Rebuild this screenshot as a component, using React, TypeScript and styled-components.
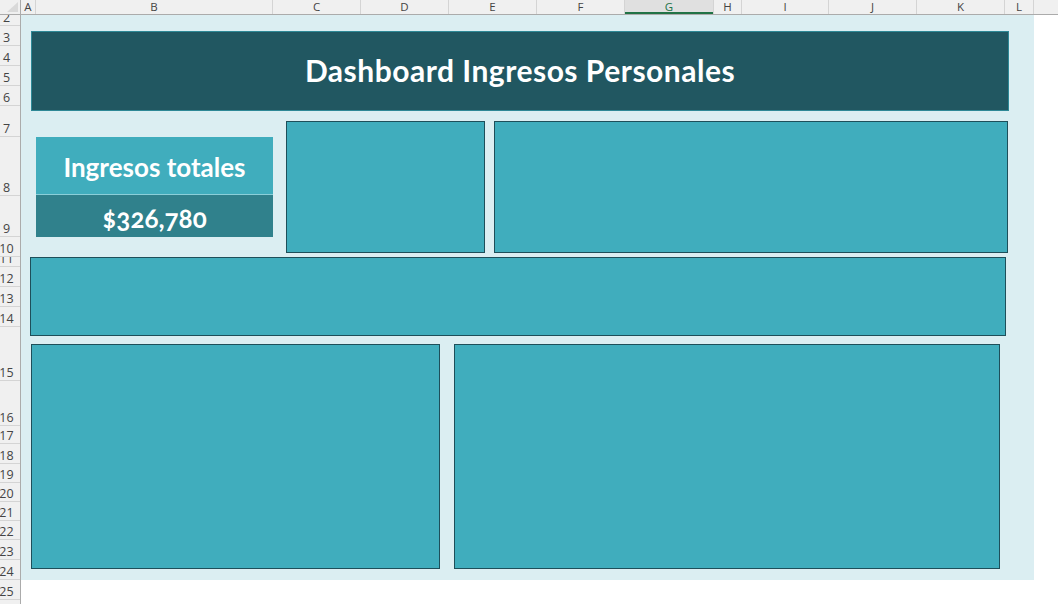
import React from "react";
import styled, { createGlobalStyle } from "styled-components";

const GlobalStyle = createGlobalStyle`
  html, body { margin: 0; padding: 0; background: #ffffff; }
  body { font-family: "Open Sans", "Liberation Sans", sans-serif; }
  * { box-sizing: border-box; }
`;

const columns = [
  { label: "A", w: 15 },
  { label: "B", w: 237 },
  { label: "C", w: 88 },
  { label: "D", w: 88 },
  { label: "E", w: 88 },
  { label: "F", w: 88 },
  { label: "G", w: 89, selected: true },
  { label: "H", w: 28 },
  { label: "I", w: 87 },
  { label: "J", w: 88 },
  { label: "K", w: 88 },
  { label: "L", w: 29 },
];

const rows: [string, number][] = [
  ["2", 11], ["3", 20], ["4", 20], ["5", 20], ["6", 20], ["7", 31], ["8", 59],
  ["9", 41], ["10", 20], ["11", 10], ["12", 20], ["13", 20], ["14", 20],
  ["15", 54], ["16", 45], ["17", 18], ["18", 20], ["19", 19], ["20", 19],
  ["21", 19], ["22", 19], ["23", 20], ["24", 20], ["25", 20], ["", 20],
];

const Frame = styled.div`
  display: grid;
  grid-template-columns: 21px 1fr;
  grid-template-rows: 15px 1fr;
  width: 1058px;
  height: 604px;
  overflow: hidden;
  background: #ffffff;
`;

const Corner = styled.div`
  background: #f0f0f0;
  border-right: 1px solid #ababab;
  border-bottom: 1px solid #ababab;
  display: flex;
  align-items: flex-end;
  justify-content: flex-end;
  padding: 0 2px 2px 0;
`;

const ColumnBar = styled.div`
  display: flex;
  background: #f0f0f0;
  border-bottom: 1px solid #ababab;
  overflow: hidden;
`;

const ColHead = styled.div<{ $w: number; $selected?: boolean }>`
  flex: 0 0 ${(p) => p.$w}px;
  height: 14px;
  border-right: 1px solid #d4d4d4;
  background: ${(p) => (p.$selected ? "#e0e0e0" : "transparent")};
  box-shadow: ${(p) => (p.$selected ? "inset 0 -2px 0 #217346" : "none")};
  color: ${(p) => (p.$selected ? "#217346" : "#444444")};
  font-size: 11.5px;
  line-height: 14px;
  text-align: center;
`;

const RowBar = styled.div`
  display: flex;
  flex-direction: column;
  background: #f0f0f0;
  border-right: 1px solid #ababab;
  overflow: hidden;
`;

const RowHead = styled.div<{ $h: number }>`
  flex: 0 0 ${(p) => p.$h}px;
  height: ${(p) => p.$h}px;
  border-bottom: 1px solid #d4d4d4;
  display: flex;
  align-items: flex-end;
  justify-content: center;
  padding-right: 7px;
  overflow: hidden;
  color: #444444;
  font-size: 12.5px;
  line-height: 15px;
`;

const Sheet = styled.div`
  background: #ffffff;
  overflow: hidden;
`;

const SheetFill = styled.div`
  width: 1013px;
  height: 565px;
  background: #dbeef2;
  display: flex;
  flex-direction: column;
  padding-top: 16px;
`;

const TitleBar = styled.div`
  margin-left: 10px;
  width: 978px;
  height: 80px;
  background: #215761;
  border: 1px solid #2e8896;
  display: flex;
  align-items: center;
  justify-content: center;
  padding-bottom: 3px;
  color: #ffffff;
  font-family: Lato, "Open Sans", sans-serif;
  font-weight: 700;
  font-size: 30px;
  letter-spacing: 0.5px;
`;

const TopRow = styled.div`
  display: flex;
  align-items: flex-start;
  margin: 10px 0 0 15px;
  height: 132px;
`;

const Panel = styled.div<{ $w: number; $h: number; $ml?: number }>`
  flex: 0 0 ${(p) => p.$w}px;
  width: ${(p) => p.$w}px;
  height: ${(p) => p.$h}px;
  margin-left: ${(p) => p.$ml ?? 0}px;
  background: #40adbd;
  border: 1px solid #1e4f5a;
`;

const KpiCard = styled.div`
  flex: 0 0 237px;
  width: 237px;
  margin-top: 16px;
  display: flex;
  flex-direction: column;
  color: #ffffff;
  font-family: Lato, "Open Sans", sans-serif;
  font-weight: 700;
`;

const KpiLabel = styled.div`
  height: 58px;
  background: #40adbd;
  border-bottom: 1px solid #8acfd9;
  display: flex;
  align-items: center;
  justify-content: center;
  font-size: 26px;
  padding-top: 2px;
`;

const KpiValue = styled.div`
  height: 42px;
  background: #30818c;
  display: flex;
  align-items: center;
  justify-content: center;
  font-size: 26px;
  font-variant-numeric: oldstyle-nums;
  font-feature-settings: "onum" 1;
  padding-top: 3px;
`;

const WideRow = styled.div`
  display: flex;
  margin: 4px 0 0 9px;
`;

const BottomRow = styled.div`
  display: flex;
  margin: 8px 0 0 10px;
`;

export default function App() {
  return (
    <>
      <GlobalStyle />
      <Frame>
        <Corner>
          <svg width="11" height="10" viewBox="0 0 11 10">
            <polygon points="11,0 11,10 0,10" fill="#d9d9d9" />
          </svg>
        </Corner>
        <ColumnBar>
          {columns.map((c) => (
            <ColHead key={c.label} $w={c.w} $selected={c.selected}>
              {c.label}
            </ColHead>
          ))}
        </ColumnBar>
        <RowBar>
          {rows.map(([label, h], i) => (
            <RowHead key={i} $h={h}>
              {label}
            </RowHead>
          ))}
        </RowBar>
        <Sheet>
          <SheetFill>
            <TitleBar>Dashboard Ingresos Personales</TitleBar>
            <TopRow>
              <KpiCard>
                <KpiLabel>Ingresos totales</KpiLabel>
                <KpiValue>$326,780</KpiValue>
              </KpiCard>
              <Panel $w={199} $h={132} $ml={13} />
              <Panel $w={514} $h={132} $ml={9} />
            </TopRow>
            <WideRow>
              <Panel $w={976} $h={79} />
            </WideRow>
            <BottomRow>
              <Panel $w={409} $h={225} />
              <Panel $w={546} $h={225} $ml={14} />
            </BottomRow>
          </SheetFill>
        </Sheet>
      </Frame>
    </>
  );
}
